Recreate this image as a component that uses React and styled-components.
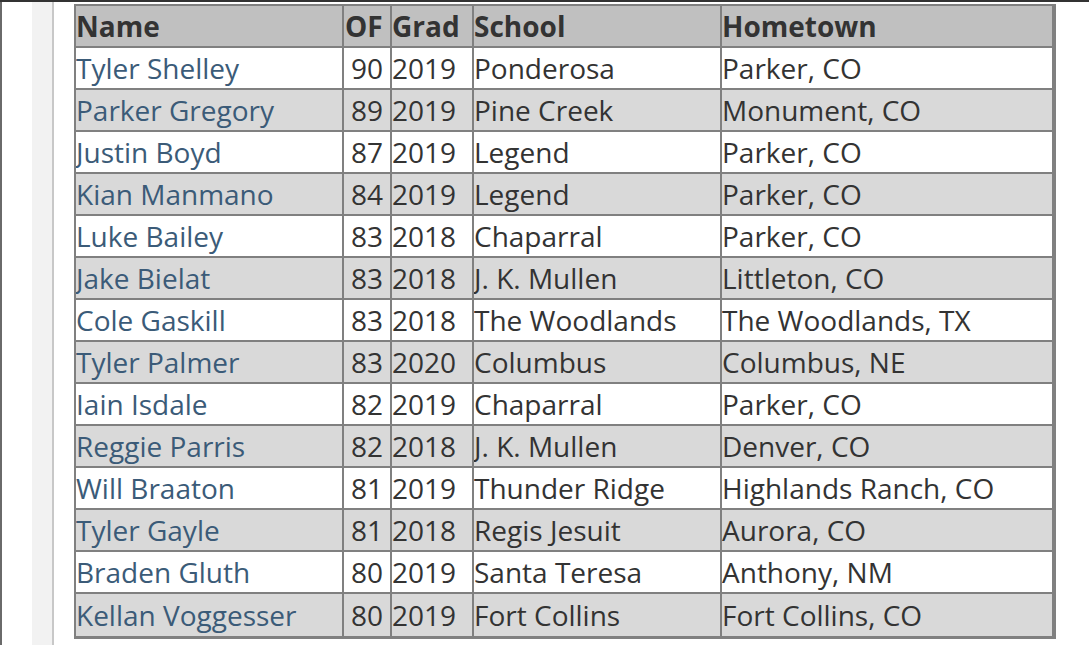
import React from 'react';
import styled, { createGlobalStyle } from 'styled-components';

const GlobalStyle = createGlobalStyle`
  html, body {
    margin: 0;
    padding: 0;
    background: #ffffff;
  }
  body {
    font-family: "Open Sans", "Liberation Sans", sans-serif;
    color: #333333;
  }
`;

const Page = styled.div`
  border-top: 2px solid #333333;
  height: 643px;
  display: flex;
  overflow: hidden;
`;

const Frame = styled.div`
  border-left: 2px solid #6a6a6a;
  padding-left: 30px;
  display: flex;
`;

const Rail = styled.div`
  width: 20px;
  background: #f2f2f2;
  border-right: 2px solid #c8c8c8;
`;

const Content = styled.main`
  padding: 2px 0 0 20px;
`;

const Table = styled.table`
  border-collapse: separate;
  border-spacing: 0;
  table-layout: fixed;
  width: 982px;
  border-style: solid;
  border-color: #808080;
  border-width: 2px 4px 3px 2px;
  font-size: 28px;
`;

const HeadCell = styled.th`
  width: ${p => p.$w}px;
  box-sizing: border-box;
  height: 42px;
  padding: 0 0 0 ${p => p.$pad || 0}px;
  background: #c0c0c0;
  color: #333333;
  font-weight: 700;
  text-align: left;
  border-right: ${p => (p.$last ? 0 : 2)}px solid #808080;
  border-bottom: 2px solid #808080;
  white-space: nowrap;
  overflow: hidden;
`;

const Row = styled.tr`
  background: ${p => (p.$alt ? '#d9d9d9' : '#ffffff')};
`;

const Cell = styled.td`
  box-sizing: border-box;
  height: 42px;
  padding: 0;
  text-align: ${p => (p.$center ? 'center' : 'left')};
  color: #333333;
  border-right: ${p => (p.$last ? 0 : 2)}px solid #808080;
  border-bottom: ${p => (p.$end ? 0 : 2)}px solid #808080;
  white-space: nowrap;
  overflow: hidden;
`;

const NameLink = styled.a`
  color: #3b5b78;
  text-decoration: none;
`;

const columns = [
  { label: 'Name', w: 268 },
  { label: 'OF', w: 48, pad: 1 },
  { label: 'Grad', w: 82 },
  { label: 'School', w: 248 },
  { label: 'Hometown', w: 330 },
];

const players = [
  ['Tyler Shelley', 90, 2019, 'Ponderosa', 'Parker, CO'],
  ['Parker Gregory', 89, 2019, 'Pine Creek', 'Monument, CO'],
  ['Justin Boyd', 87, 2019, 'Legend', 'Parker, CO'],
  ['Kian Manmano', 84, 2019, 'Legend', 'Parker, CO'],
  ['Luke Bailey', 83, 2018, 'Chaparral', 'Parker, CO'],
  ['Jake Bielat', 83, 2018, 'J. K. Mullen', 'Littleton, CO'],
  ['Cole Gaskill', 83, 2018, 'The Woodlands', 'The Woodlands, TX'],
  ['Tyler Palmer', 83, 2020, 'Columbus', 'Columbus, NE'],
  ['Iain Isdale', 82, 2019, 'Chaparral', 'Parker, CO'],
  ['Reggie Parris', 82, 2018, 'J. K. Mullen', 'Denver, CO'],
  ['Will Braaton', 81, 2019, 'Thunder Ridge', 'Highlands Ranch, CO'],
  ['Tyler Gayle', 81, 2018, 'Regis Jesuit', 'Aurora, CO'],
  ['Braden Gluth', 80, 2019, 'Santa Teresa', 'Anthony, NM'],
  ['Kellan Voggesser', 80, 2019, 'Fort Collins', 'Fort Collins, CO'],
];

export default function App() {
  return (
    <>
      <GlobalStyle />
      <Page>
        <Frame>
          <Rail />
        </Frame>
        <Content>
          <Table>
            <thead>
              <tr>
                {columns.map((c, i) => (
                  <HeadCell key={c.label} $w={c.w} $pad={c.pad} $last={i === columns.length - 1}>
                    {c.label}
                  </HeadCell>
                ))}
              </tr>
            </thead>
            <tbody>
              {players.map(([name, of, grad, school, town], i) => {
                const end = i === players.length - 1;
                return (
                  <Row key={name} $alt={i % 2 === 1}>
                    <Cell $end={end}>
                      <NameLink href="#">{name}</NameLink>
                    </Cell>
                    <Cell $end={end} $center>{of}</Cell>
                    <Cell $end={end}>{grad}</Cell>
                    <Cell $end={end}>{school}</Cell>
                    <Cell $end={end} $last>{town}</Cell>
                  </Row>
                );
              })}
            </tbody>
          </Table>
        </Content>
      </Page>
    </>
  );
}
